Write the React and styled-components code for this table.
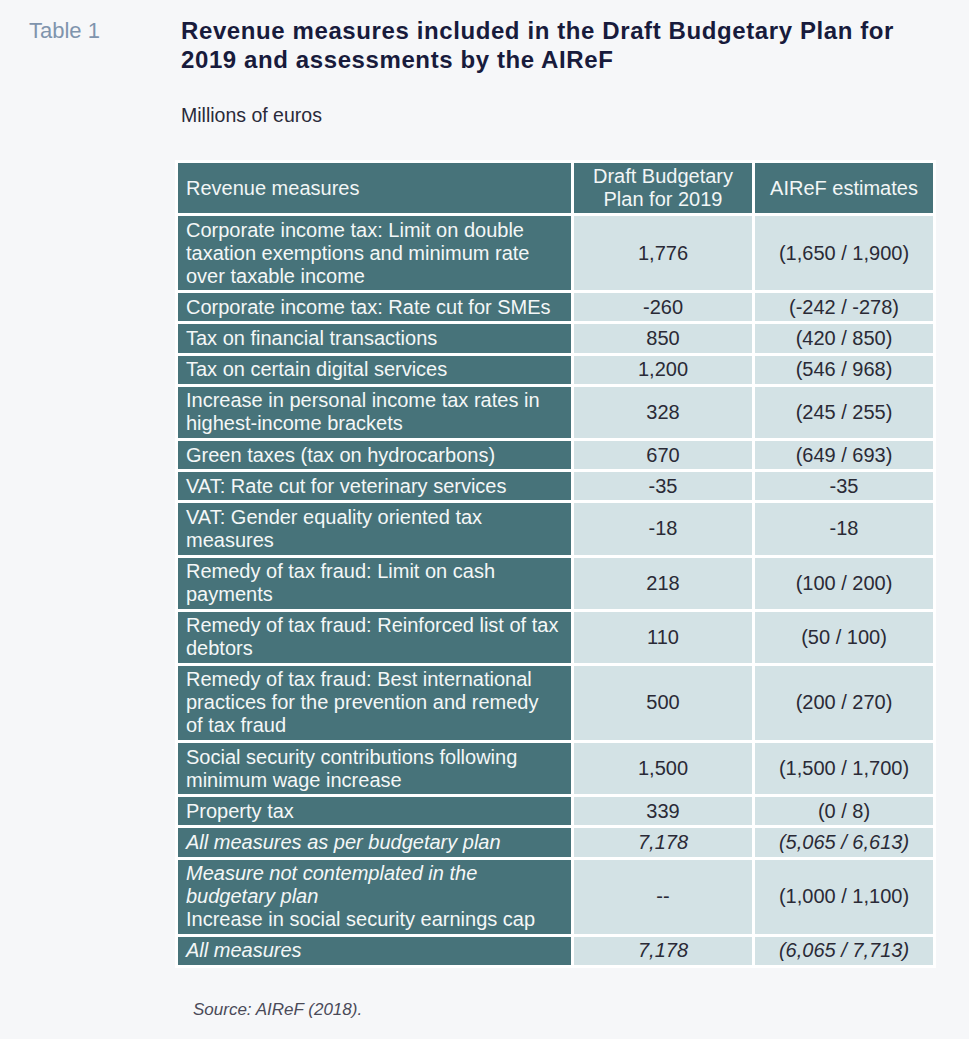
import styled, { createGlobalStyle } from 'styled-components'

const GlobalStyle = createGlobalStyle`
  html, body {
    margin: 0;
    background: #f6f7f9;
  }
  body {
    font-family: "Liberation Sans", Arial, sans-serif;
  }
`

const rows = [
  { label: ['Corporate income tax: Limit on double', 'taxation exemptions and minimum rate', 'over taxable income'], plan: '1,776', airef: '(1,650 / 1,900)' },
  { label: ['Corporate income tax: Rate cut for SMEs'], plan: '-260', airef: '(-242 / -278)' },
  { label: ['Tax on financial transactions'], plan: '850', airef: '(420 / 850)' },
  { label: ['Tax on certain digital services'], plan: '1,200', airef: '(546 / 968)' },
  { label: ['Increase in personal income tax rates in', 'highest-income brackets'], plan: '328', airef: '(245 / 255)' },
  { label: ['Green taxes (tax on hydrocarbons)'], plan: '670', airef: '(649 / 693)' },
  { label: ['VAT: Rate cut for veterinary services'], plan: '-35', airef: '-35' },
  { label: ['VAT: Gender equality oriented tax', 'measures'], plan: '-18', airef: '-18' },
  { label: ['Remedy of tax fraud: Limit on cash', 'payments'], plan: '218', airef: '(100 / 200)' },
  { label: ['Remedy of tax fraud: Reinforced list of tax', 'debtors'], plan: '110', airef: '(50 / 100)' },
  { label: ['Remedy of tax fraud: Best international', 'practices for the prevention and remedy', 'of tax fraud'], plan: '500', airef: '(200 / 270)' },
  { label: ['Social security contributions following', 'minimum wage increase'], plan: '1,500', airef: '(1,500 / 1,700)' },
  { label: ['Property tax'], plan: '339', airef: '(0 / 8)' },
  { label: ['All measures as per budgetary plan'], plan: '7,178', airef: '(5,065 / 6,613)', total: true },
  { label: ['Measure not contemplated in the', 'budgetary plan'], extra: 'Increase in social security earnings cap', plan: '--', airef: '(1,000 / 1,100)', labelItalic: true },
  { label: ['All measures'], plan: '7,178', airef: '(6,065 / 7,713)', total: true },
]

export default function App() {
  return (
    <>
      <GlobalStyle />
      <Page>
        <TableLabel>Table 1</TableLabel>
        <Content>
          <Title>Revenue measures included in the Draft Budgetary Plan for<br />2019 and assessments by the AIReF</Title>
          <Units>Millions of euros</Units>
          <DataTable>
            <colgroup>
              <col style={{ width: 393 }} />
              <col style={{ width: 178 }} />
              <col style={{ width: 178 }} />
            </colgroup>
            <thead>
              <tr>
                <HeadCell>Revenue measures</HeadCell>
                <HeadCell $center>Draft Budgetary<br />Plan for 2019</HeadCell>
                <HeadCell $center>AIReF estimates</HeadCell>
              </tr>
            </thead>
            <tbody>
              {rows.map((r, i) => (
                <tr key={i}>
                  <LabelCell $italic={r.total || r.labelItalic}>
                    {r.label.map((line, j) => (
                      <Line key={j}>{line}</Line>
                    ))}
                    {r.extra && <Line $plain>{r.extra}</Line>}
                  </LabelCell>
                  <ValueCell $italic={r.total}>{r.plan}</ValueCell>
                  <ValueCell $italic={r.total}>{r.airef}</ValueCell>
                </tr>
              ))}
            </tbody>
          </DataTable>
          <Source>Source: AIReF (2018).</Source>
        </Content>
      </Page>
    </>
  )
}

const Page = styled.div`
  display: grid;
  grid-template-columns: 146px 1fr;
  padding: 16px 0 20px 29px;
`

const TableLabel = styled.div`
  font-size: 22px;
  line-height: 29px;
  color: #7f94ad;
`

const Content = styled.div`
  display: flex;
  flex-direction: column;
  align-items: flex-start;
`

const Title = styled.h1`
  margin: 0;
  padding-left: 6px;
  font-size: 24px;
  line-height: 29px;
  font-weight: 700;
  letter-spacing: 0.6px;
  color: #181b3c;
`

const Units = styled.div`
  margin-top: 29px;
  padding-left: 6px;
  font-size: 19.5px;
  line-height: 24px;
  color: #2a2a3a;
`

const DataTable = styled.table`
  margin-top: 33px;
  width: 761px;
  table-layout: fixed;
  border-collapse: separate;
  border-spacing: 3px;
  background: #ffffff;
  font-size: 20px;
  line-height: 23px;
`

const HeadCell = styled.th`
  background: #47737a;
  color: #f2f6f6;
  font-weight: 400;
  text-align: ${p => (p.$center ? 'center' : 'left')};
  vertical-align: middle;
  padding: 2px 8px;
  height: 46px;
`

const LabelCell = styled.td`
  background: #47737a;
  color: #f4f7f7;
  font-style: ${p => (p.$italic ? 'italic' : 'normal')};
  padding: 2.6px 4px 2.6px 8px;
  vertical-align: middle;
`

const Line = styled.div`
  white-space: nowrap;
  font-style: ${p => (p.$plain ? 'normal' : 'inherit')};
`

const ValueCell = styled.td`
  background: #d3e2e5;
  color: #2a2a36;
  text-align: center;
  vertical-align: middle;
  font-style: ${p => (p.$italic ? 'italic' : 'normal')};
  padding: 2.6px 4px;
`

const Source = styled.div`
  margin-top: 32px;
  padding-left: 18px;
  font-size: 17px;
  line-height: 20px;
  font-style: italic;
  color: #4a4a58;
`
